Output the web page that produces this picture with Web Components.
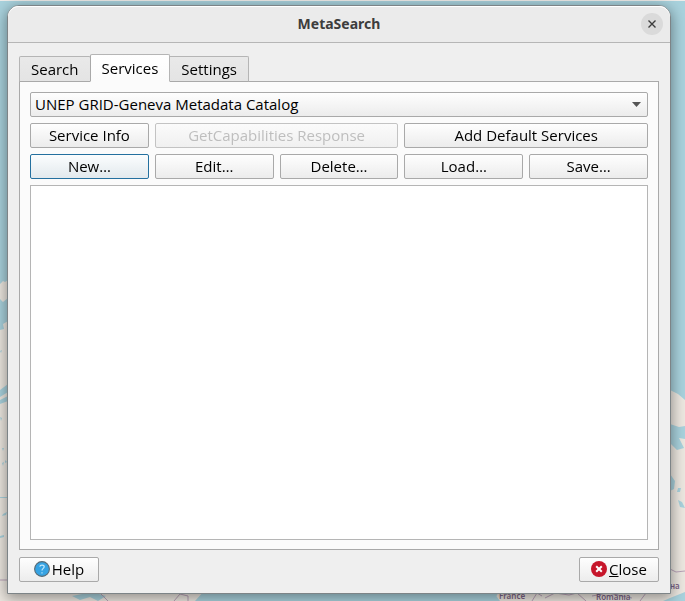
<!DOCTYPE html>
<html lang="en"><head><meta charset="utf-8"><title>MetaSearch</title>
<style>
html,body{margin:0;height:100%}
body{display:flex;background:#9cc4cf;font:15px/20px "Open Sans","Noto Sans",sans-serif;color:#000;overflow:hidden}
</style></head><body>
<map-backdrop></map-backdrop>
<dialog-window caption="MetaSearch">
  <tab-panel tabs="Search,Services,Settings" current="Services">
    <service-picker></service-picker>
    <button-row>
      <push-button span="1">Service Info</push-button>
      <push-button span="2" disabled>GetCapabilities Response</push-button>
      <push-button span="2">Add Default Services</push-button>
      <push-button span="1" primary>New…</push-button>
      <push-button span="1">Edit…</push-button>
      <push-button span="1">Delete…</push-button>
      <push-button span="1">Load…</push-button>
      <push-button span="1">Save…</push-button>
    </button-row>
    <metadata-view></metadata-view>
  </tab-panel>
  <push-button slot="footer" wide>
    <svg slot="icon" width="16" height="16" viewBox="0 0 16 16" aria-hidden="true"><circle cx="8" cy="8" r="7.4" fill="#36a3e3" stroke="#596b75" stroke-width="1.1"/><path d="M5.8 5.6C6 3.6 10.2 3.5 10.2 5.8C10.2 7.4 8 7.4 8 9.5M8 11.2v1.4" fill="none" stroke="#c5e8fa" stroke-width="1.2"/></svg>Help</push-button>
  <push-button slot="footer" wide>
    <svg slot="icon" width="16" height="16" viewBox="0 0 16 16" aria-hidden="true"><circle cx="8" cy="8" r="8" fill="#c7162b"/><path d="M5.2 5.2l5.6 5.6M10.8 5.2l-5.6 5.6" stroke="#fff" stroke-width="2"/></svg><u>C</u>lose</push-button>
</dialog-window>
<script>
class BaseElement extends HTMLElement{
  constructor(){super();this.attachShadow({mode:"open"});}
  connectedCallback(){this.shadowRoot.innerHTML=this.render();}
}
customElements.define("map-backdrop",class extends BaseElement{render(){return `
<style>:host{position:fixed;inset:0;z-index:-1}svg{display:block;width:100%;height:100%}text{font:600 8px "Noto Sans",sans-serif;fill:#7c6486}</style>
<svg viewBox="0 0 685 601" preserveAspectRatio="none" aria-hidden="true">
<rect width="685" height="601" fill="#a9d2dd"/><rect width="685" height="1" fill="#eeecea"/>
<g fill="#ece7e0">
<path d="M0 284l3-3 2 1 3-2v18l-5 4-3-3zM0 330l4-1-1-5 5-3v280H0zM0 590h205l-10 11H0zM670 390l8 4 7 6v201H494l4-8h172z"/><path d="M240 593l4-2v4zM251 593l5-1-1 5-3-1z"/></g>
<g fill="#a9d2dd"><path d="M670 424l9 3 6-1v13l-6-1 5 10-7 2-7-7zM670 474l5 7-1 8-4 2zM678 488l3 0-1 4h-3zM678 500l4 2 3 6-5-1zM0 390l8-6v8l-8 5zM0 400l8-4v5l-8 3zM72 596l20-4 14 4-8 5-8-4-10 3zM202 593h292l6 8H208zM670 598l15-6v9h-22zM0 351l2-1-1 3zM0 417l2 1-1 3zM2 448l2 0-1 3zM5 460l2 2-2 1zM2 463l2-1-1 4zM3 514l4-2-1 3-4 1zM0 536l4-1v2l-4 1zM0 497h7v1H0z"/></g>
<g fill="none" stroke="#b9a2b8"><path d="M0 580h8M100 593l8 8M174 601l6-7 8 2v5M532 601l5-8 5 3M545 598l10-5 14 2 8-2 9 8M592 596l16-3 24 5M670 569l6 3 9-1M640 601l6-8"/></g>
<text x="499" y="599">France</text><text x="596" y="600">România</text><text x="670" y="589">на</text>
</svg>`}});
customElements.define("dialog-window",class extends BaseElement{render(){return `
<style>
:host{flex:1;min-width:0;display:flex;flex-direction:column;margin:5px 14px 7px 7px;background:#efefef;border:1px solid #7d8487;border-radius:12px 12px 0 0;box-shadow:0 3px 14px 1px rgba(0,0,0,.4);box-sizing:border-box}
header{display:grid;grid-template-columns:1fr auto 1fr;align-items:center;height:36px;padding:0 7px;background:#ebebeb;border-bottom:1px solid #b6b6b6;border-radius:11px 11px 0 0;box-shadow:inset 0 1px #fff}
h1{grid-column:2;margin:0;font:700 14px/20px "Noto Sans",sans-serif;color:#3d3d3d}
.x{justify-self:end;display:grid;place-items:center;width:22px;height:22px;padding:0;border:0;border-radius:50%;background:#dadada}
main{flex:1;display:flex;flex-direction:column;min-height:0;padding:11px;gap:7px}
::slotted(tab-panel){flex:1;min-height:0}
footer{display:flex;justify-content:space-between}
</style>
<header><h1>${this.getAttribute("caption")}</h1><button class="x" aria-label="Close window"><svg width="8" height="8" viewBox="0 0 8 8"><path d="M.5.5l7 7M7.5.5l-7 7" stroke="#3d3d3d" stroke-width="1.4"/></svg></button></header>
<main><slot></slot><footer><slot name="footer"></slot></footer></main>`}});
customElements.define("tab-panel",class extends BaseElement{render(){
const c=this.getAttribute("current");
return `
<style>
:host{display:flex;flex-direction:column}
nav{display:flex;align-items:flex-end;margin-bottom:-1px;z-index:1}
button{font:inherit;line-height:20px;height:26px;padding:0 11px 1px;border:1px solid #b5b5b5;border-bottom-color:#a9a9a9;border-left:0;border-radius:0 2px 0 0;background:linear-gradient(#e9e9e9,#e4e4e4);color:#000}
button:first-child{border-left:1px solid #b5b5b5;border-top-left-radius:2px}
button[aria-selected=true]{height:28px;margin-left:-1px;border-left:1px solid #a9a9a9;border-bottom-color:#fbfbfb;border-radius:2px 2px 0 0;background:linear-gradient(#fff,#fbfbfb)}
section{flex:1;display:flex;flex-direction:column;gap:6px;min-height:0;padding:10px 10px 9px;border:1px solid #a9a9a9;background:#fbfbfb}
::slotted(metadata-view){flex:1}
</style>
<nav role="tablist">${this.getAttribute("tabs").split(",").map(t=>`<button role="tab" aria-selected="${t===c}">${t}</button>`).join("")}</nav>
<section role="tabpanel" aria-label="${c}"><slot></slot></section>`}});
customElements.define("service-picker",class extends BaseElement{render(){return `
<style>
:host{display:grid;align-items:center}
select,svg{grid-area:1/1}
select{appearance:none;width:100%;height:25px;padding:0 24px 2px 4px;font:inherit;color:#000;border:1px solid #a9a9a9;border-radius:2px;background:linear-gradient(#fefefe,#ececec)}
svg{justify-self:end;margin-right:7px;pointer-events:none}
</style>
<select aria-label="Service"><option>UNEP GRID-Geneva Metadata Catalog</option></select>
<svg width="9" height="5" viewBox="0 0 9 5"><path d="M0 0h9L4.5 5z" fill="#555"/></svg>`}});
customElements.define("button-row",class extends BaseElement{render(){return `
<style>:host{display:grid;grid-template-columns:repeat(5,1fr);gap:6px}::slotted([span="2"]){grid-column:span 2}</style><slot></slot>`}});
customElements.define("push-button",class extends BaseElement{render(){return `
<style>
:host{display:block;min-width:0}
:host([wide]) button{width:80px}
button{display:flex;align-items:center;justify-content:center;gap:2px;width:100%;height:25px;padding:0 0 2px;font:inherit;color:#000;white-space:nowrap;border:1px solid #a9a9a9;border-radius:2px;background:linear-gradient(#fefefe,#ececec)}
button:disabled{color:#bebebe;border-color:#c3c3c3;background:linear-gradient(#fbfbfb,#f0f0f0)}
:host([primary]) button{border-color:#24709f;background:linear-gradient(#fbfdfe,#e2e9ed)}
</style>
<button type="button" ${this.hasAttribute("disabled")?"disabled":""}><slot name="icon"></slot><span><slot></slot></span></button>`}});
customElements.define("metadata-view",class extends BaseElement{render(){return `
<style>:host{display:block;box-sizing:border-box;background:#fff;border:1px solid #b5b5b5}</style>`}});
</script></body></html>
